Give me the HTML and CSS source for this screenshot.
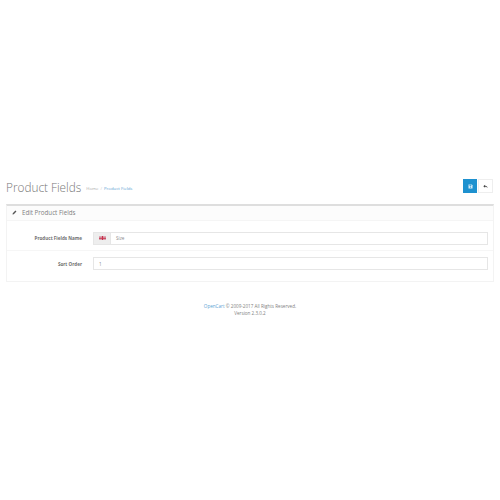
FILE: index.html
```html
<!DOCTYPE html>
<html lang="en">
<head>
<meta charset="utf-8">
<title>Product Fields</title>
<link rel="stylesheet" href="styles.css">
</head>
<body>
<div class="page">
  <div class="page-header">
    <div class="title-group">
      <h1 class="title">Product Fields</h1>
      <ul class="crumbs">
        <li class="crumb-home">Home</li>
        <li class="crumb-sep">/</li>
        <li class="crumb-link">Product Fields</li>
      </ul>
    </div>
    <div class="actions">
      <span class="btn btn-primary">
        <svg class="icon" viewBox="0 0 10 10"><path d="M1 1h6.5L9 2.5V9H1z" fill="#d5ecf8"/><rect x="3" y="1.6" width="3.6" height="2" fill="#1e91cf"/><circle cx="5" cy="6.2" r="1.3" fill="#1e91cf"/></svg>
      </span>
      <span class="btn btn-default">
        <svg class="icon" viewBox="0 0 10 10"><path d="M4.2 1.5L.6 4.4l3.6 2.9V5.5c2 0 3.6.4 4.8 2.6 0-2.8-1.6-4.4-4.8-4.6z" fill="#444"/></svg>
      </span>
    </div>
  </div>
  <div class="panel">
    <div class="panel-heading">
      <svg class="pencil" viewBox="0 0 10 10"><path d="M1 9l.5-2.6L6.8 1.1l2.1 2.1-5.3 5.3z" fill="#555"/></svg>
      <span>Edit Product Fields</span>
    </div>
    <div class="panel-body">
      <div class="form-row form-row-first">
        <label class="form-label">Product Fields Name</label>
        <div class="input-group">
          <span class="addon">
            <svg class="flag" viewBox="0 0 8 5"><rect width="8" height="5" fill="#d8a7b4"/><path d="M0 2h8v1H0zM3.4 0h1.2v5H3.4z" fill="#c9304a"/></svg>
          </span>
          <span class="input input-joined">Size</span>
        </div>
      </div>
      <div class="form-row form-row-last">
        <label class="form-label">Sort Order</label>
        <div class="input-group">
          <span class="input">1</span>
        </div>
      </div>
    </div>
  </div>
  <footer class="footer">
    <div><a class="footer-link">OpenCart</a> © 2009-2017 All Rights Reserved.</div>
    <div>Version 2.3.0.2</div>
  </footer>
</div>
</body>
</html>
```
FILE: styles.css
```css
* { box-sizing: border-box; }
html, body { margin: 0; padding: 0; background: #fff; }
body { font-family: "Open Sans", "Liberation Sans", sans-serif; color: #666; }
.page { width: 500px; height: 500px; padding: 179px 6px 0; }
.page-header { display: flex; justify-content: space-between; align-items: flex-start; height: 25px; }
.title-group { display: flex; align-items: center; gap: 5px; margin-top: 1px; }
.title { margin: 0; font-size: 11.8px; line-height: 15px; font-weight: 300; color: #777; }
.crumbs { display: flex; gap: 2px; list-style: none; margin: 1px 0 0; padding: 0; font-size: 4.3px; line-height: 6px; }
.crumb-home { color: #aaa; }
.crumb-sep { color: #ccc; }
.crumb-link { color: #5da2d4; }
.actions { display: flex; gap: 1px; padding-right: 1px; }
.btn { width: 15px; height: 14px; display: flex; align-items: center; justify-content: center; }
.btn-primary { width: 14px; background: #1e91cf; }
.btn-default { background: #fff; border: 1px solid #eee; }
.icon { width: 5px; height: 5px; }
.panel { height: 78px; border: 1px solid #f3f3f3; border-top: 2px solid #dedede; }
.panel-heading { height: 15px; display: flex; align-items: center; gap: 5px; padding: 0 0 2px 5px; font-size: 6.2px; color: #808080; border-bottom: 1px solid #f5f5f5; background: #fcfcfc; }
.pencil { width: 5px; height: 5px; }
.form-row { display: flex; align-items: center; padding-right: 5px; }
.form-row-first { height: 30px; padding-top: 10px; padding-bottom: 5px; border-bottom: 1px solid #f6f6f6; }
.form-row-last { height: 19px; padding-top: 6px; }
.form-label { width: 75px; text-align: right; font-size: 4.6px; font-weight: 700; color: #707070; }
.input-group { flex: 1; margin-left: 11px; display: flex; height: 13px; }
.addon { width: 17px; display: flex; align-items: center; justify-content: center; background: #eee; border: 1px solid #e6e6e6; border-right: none; }
.flag { width: 7px; height: 4.5px; }
.input { flex: 1; display: flex; align-items: center; padding-left: 5px; border: 1px solid #e6e6e6; font-size: 4.6px; color: #888; background: #fff; }
.footer { margin-top: 21px; text-align: center; font-size: 4.6px; line-height: 7px; color: #808080; }
.footer-link { color: #5da2d4; }
```
